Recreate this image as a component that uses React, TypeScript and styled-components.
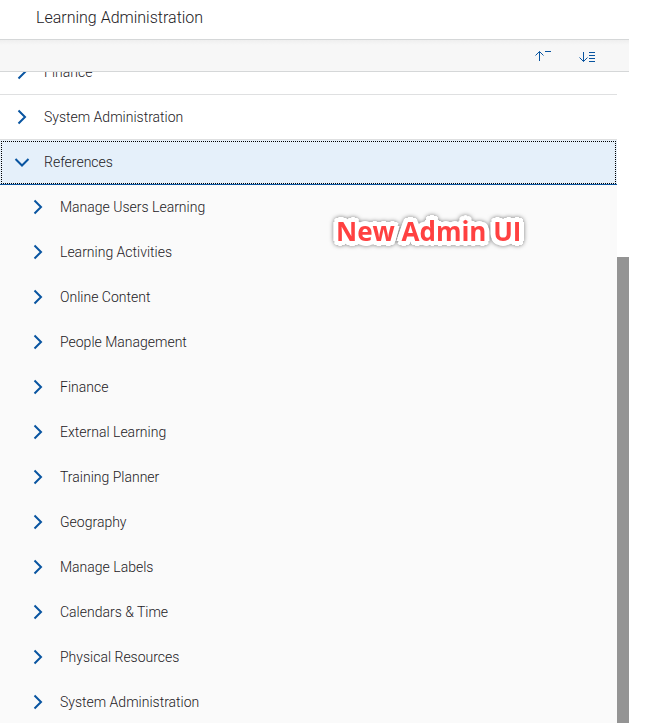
import React, { useState } from "react";
import styled, { createGlobalStyle } from "styled-components";

const GlobalStyle = createGlobalStyle`
  * { box-sizing: border-box; }
  body { margin: 0; background: #fff; }
`;

const Page = styled.main`
  display: flex;
  flex-direction: column;
  height: 100vh;
  padding-right: 16px;
  overflow: hidden;
  color: #1c2024;
  font-family: Roboto, "Liberation Sans", sans-serif;
  font-size: 14px;
  font-weight: 350;
`;

const Header = styled.header`
  display: flex;
  align-items: center;
  flex: none;
  height: 40px;
  padding: 0 36px 4px;
  border-bottom: 1px solid #d5d7d8;
`;

const Title = styled.h1`
  margin: 0;
  font-size: 16px;
  font-weight: 350;
  line-height: 20px;
`;

const Toolbar = styled.div`
  display: flex;
  flex: none;
  justify-content: flex-end;
  align-items: center;
  gap: 12px;
  height: 32px;
  padding-right: 26px;
  border-bottom: 1px solid #d5d7d8;
  background: linear-gradient(#efefef, #f7f7f7 5px);
`;

const ToolButton = styled.button`
  display: flex;
  align-items: center;
  justify-content: center;
  width: 32px;
  height: 30px;
  padding: 0;
  border: 0;
  background: transparent;
  color: #0854a0;
  cursor: pointer;
`;

const Viewport = styled.div`
  display: flex;
  flex: 1;
  min-height: 0;
`;

const Scroller = styled.div`
  position: relative;
  flex: 1;
  min-width: 0;
  overflow: hidden;
  background: #fafafa;
`;

const Tree = styled.ul<{ $scrolled?: number }>`
  margin: ${(p) => (p.$scrolled ? `-${p.$scrolled}px` : 0)} 0 0;
  padding: 0;
  list-style: none;
`;

const Row = styled.button<{ $level: number; $selected: boolean }>`
  display: flex;
  align-items: center;
  gap: 12px;
  width: 100%;
  height: 45px;
  padding: 0 14px 0 ${(p) => (p.$level ? 28 : 12)}px;
  border: 0;
  border-bottom: 1px solid
    ${(p) => (p.$selected ? "#0854a0" : p.$level ? "#fafafa" : "#dfe0e1")};
  outline: ${(p) => (p.$selected ? "1px dotted #000" : "none")};
  outline-offset: -2px;
  background: ${(p) => (p.$selected ? "#e5f0fa" : p.$level ? "#fafafa" : "#fff")};
  color: inherit;
  font: inherit;
  line-height: 20px;
  text-align: left;
  cursor: pointer;
`;

const Chevron = styled.svg`
  flex: none;
  width: 20px;
  height: 20px;
  fill: none;
  stroke: #0854a0;
  stroke-width: 2;
`;

const Track = styled.div`
  flex: none;
  width: 12px;
  padding-top: 185px;
  background: #fff;
`;

const Thumb = styled.div`
  height: 100%;
  background: #949494;
`;

const Callout = styled.strong`
  position: absolute;
  top: 142px;
  left: 336px;
  color: #ff4141;
  font-family: "Open Sans", sans-serif;
  font-size: 26px;
  font-weight: 700;
  line-height: 34px;
  white-space: nowrap;
  text-shadow:
    5px 0 #fff, -5px 0 #fff, 0 5px #fff, 0 -5px #fff,
    4px 3px #fff, -4px 3px #fff, 4px -3px #fff, -4px -3px #fff,
    3px 4px #fff, -3px 4px #fff, 3px -4px #fff, -3px -4px #fff,
    2px 2px #fff, -2px 2px #fff, 2px -2px #fff, -2px -2px #fff;
  filter: drop-shadow(0 0 2px rgba(0, 0, 0, 0.5));
  pointer-events: none;
`;

type Node = { label: string; children?: string[] };

const nodes: Node[] = [
  { label: "Finance" },
  { label: "System Administration" },
  {
    label: "References",
    children: [
      "Manage Users Learning",
      "Learning Activities",
      "Online Content",
      "People Management",
      "Finance",
      "External Learning",
      "Training Planner",
      "Geography",
      "Manage Labels",
      "Calendars & Time",
      "Physical Resources",
      "System Administration",
    ],
  },
];

function Arrow({ open }: { open?: boolean }) {
  return (
    <Chevron viewBox="0 0 20 20" aria-hidden="true">
      <path d={open ? "M3.5 7 L10 13.5 L16.5 7" : "M6.5 3.5 L13 10 L6.5 16.5"} />
    </Chevron>
  );
}

function CollapseIcon() {
  return (
    <svg width="18" height="16" viewBox="0 0 18 16" fill="none" stroke="currentColor" aria-hidden="true">
      <path d="M5.5 13V3.5M1.5 7.5L5.5 3.5L9.5 7.5M11 3.5H17" />
    </svg>
  );
}

function ExpandIcon() {
  return (
    <svg width="18" height="16" viewBox="0 0 18 16" fill="none" stroke="currentColor" aria-hidden="true">
      <path d="M5.5 4V13.5M1.5 9.5L5.5 13.5L9.5 9.5M11 4.5H17M11 7.5H17M11 10.5H17M11 13.5H17" />
    </svg>
  );
}

export default function App() {
  const [open, setOpen] = useState(true);
  return (
    <Page>
      <GlobalStyle />
      <Header>
        <Title>Learning Administration</Title>
      </Header>
      <Toolbar>
        <ToolButton aria-label="Collapse all" onClick={() => setOpen(false)}>
          <CollapseIcon />
        </ToolButton>
        <ToolButton aria-label="Expand all" onClick={() => setOpen(true)}>
          <ExpandIcon />
        </ToolButton>
      </Toolbar>
      <Viewport>
        <Scroller>
          <Tree $scrolled={22}>
            {nodes.map((node) => {
              const expanded = !!node.children && open;
              return (
                <li key={node.label}>
                  <Row
                    $level={0}
                    $selected={!!node.children}
                    aria-expanded={expanded}
                    onClick={() => node.children && setOpen(!open)}
                  >
                    <Arrow open={expanded} />
                    {node.label}
                  </Row>
                  {expanded && (
                    <Tree>
                      {node.children!.map((label) => (
                        <li key={label}>
                          <Row $level={1} $selected={false} aria-expanded={false}>
                            <Arrow />
                            {label}
                          </Row>
                        </li>
                      ))}
                    </Tree>
                  )}
                </li>
              );
            })}
          </Tree>
          <Callout>New Admin UI</Callout>
        </Scroller>
        <Track>
          <Thumb />
        </Track>
      </Viewport>
    </Page>
  );
}
